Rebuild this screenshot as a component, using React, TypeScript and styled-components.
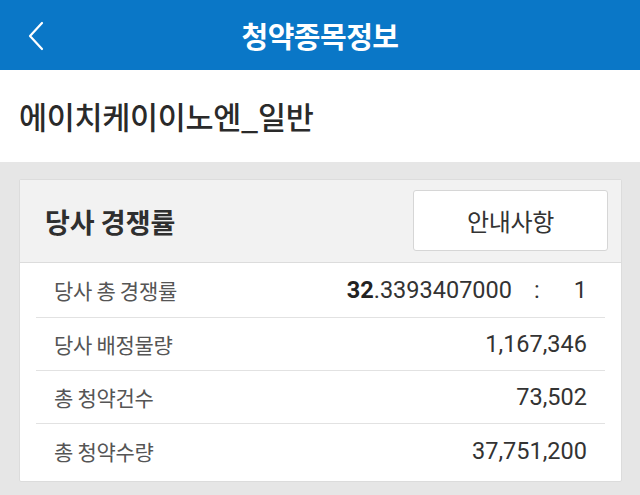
import React from "react";
import styled, { createGlobalStyle } from "styled-components";

const Global = createGlobalStyle`
  html, body { margin: 0; padding: 0; background: #e6e6e6; }
  body { font-family: Roboto, "Noto Sans CJK KR", sans-serif; }
  * { box-sizing: border-box; }
`;

const Page = styled.div`
  width: 640px;
  height: 495px;
  background: #e6e6e6;
  display: flex;
  flex-direction: column;
  overflow: hidden;
`;

const TopBar = styled.header`
  height: 70px;
  background: #0a77c7;
  display: flex;
  align-items: center;
  position: relative;
`;

const BackButton = styled.button`
  position: absolute;
  left: 22px;
  top: 18px;
  width: 28px;
  height: 36px;
  background: none;
  border: none;
  padding: 0;
  display: flex;
  align-items: center;
  justify-content: center;
`;

const TopTitle = styled.h1`
  flex: 1;
  margin: 0;
  text-align: center;
  color: #fff;
  font-family: "Noto Sans CJK KR", sans-serif;
  font-size: 29px;
  font-weight: 700;
  letter-spacing: -0.5px;
  line-height: 1;
`;

const NameSection = styled.section`
  height: 92px;
  background: #fff;
  display: flex;
  align-items: center;
  padding-left: 19px;
`;

const StockName = styled.h2`
  margin: 0;
  font-family: "Noto Sans CJK KR", sans-serif;
  font-size: 30.5px;
  font-weight: 500;
  color: #2a2a2a;
  letter-spacing: -0.3px;
`;

const Content = styled.main`
  flex: 1;
  padding: 17px 18px 0 19px;
`;

const Card = styled.div`
  border: 1px solid #dcdcdc;
  border-radius: 2px;
  background: #fff;
`;

const CardHeader = styled.div`
  height: 83px;
  background: #f2f2f2;
  border-bottom: 1px solid #dcdcdc;
  display: flex;
  align-items: center;
  justify-content: space-between;
  padding: 0 13px 0 25px;
`;

const CardTitle = styled.h3`
  margin: 0;
  font-family: "Noto Sans CJK KR", sans-serif;
  font-size: 27px;
  font-weight: 700;
  color: #2f2f2f;
  letter-spacing: 0;
`;

const InfoButton = styled.button`
  width: 195px;
  height: 61px;
  margin-top: -2px;
  background: #fff;
  border: 1px solid #d6d6d6;
  border-radius: 3px;
  font-family: "Noto Sans CJK KR", sans-serif;
  font-size: 24px;
  color: #333;
  letter-spacing: -0.3px;
`;

const CardBody = styled.div`
  padding: 0 16px 4px 16px;
`;

const Row = styled.div<{ $first?: boolean }>`
  height: ${(p) => (p.$first ? "55px" : "53px")};
  display: flex;
  align-items: center;
  justify-content: space-between;
  padding: 0 18px 0 18px;
  border-bottom: 1px solid #e2e2e2;
  &:last-child { border-bottom: none; }
`;

const Label = styled.span`
  font-family: "Noto Sans CJK KR", sans-serif;
  font-size: 21px;
  color: #555;
  letter-spacing: -0.3px;
`;

const Value = styled.span`
  font-family: Roboto, sans-serif;
  font-size: 23.5px;
  color: #333;
  display: flex;
  align-items: baseline;
`;

const Strong = styled.b`
  font-weight: 700;
  color: #222;
`;

const Colon = styled.span`
  margin: 0 0 0 22px;
  width: 8px;
`;

const One = styled.span`
  width: 45px;
  text-align: right;
`;

const rows = [
  { label: "당사 배정물량", value: "1,167,346" },
  { label: "총 청약건수", value: "73,502" },
  { label: "총 청약수량", value: "37,751,200" },
];

export default function App() {
  return (
    <Page>
      <Global />
      <TopBar>
        <BackButton aria-label="back">
          <svg width="18" height="30" viewBox="0 0 18 30">
            <path d="M15 2 L3 15 L15 28" fill="none" stroke="#fff" strokeWidth="2.2" strokeLinecap="round" strokeLinejoin="round" />
          </svg>
        </BackButton>
        <TopTitle>청약종목정보</TopTitle>
      </TopBar>
      <NameSection>
        <StockName>에이치케이이노엔_일반</StockName>
      </NameSection>
      <Content>
        <Card>
          <CardHeader>
            <CardTitle>당사 경쟁률</CardTitle>
            <InfoButton>안내사항</InfoButton>
          </CardHeader>
          <CardBody>
            <Row $first>
              <Label>당사 총 경쟁률</Label>
              <Value>
                <Strong>32</Strong>.3393407000
                <Colon>:</Colon>
                <One>1</One>
              </Value>
            </Row>
            {rows.map((r) => (
              <Row key={r.label}>
                <Label>{r.label}</Label>
                <Value>{r.value}</Value>
              </Row>
            ))}
          </CardBody>
        </Card>
      </Content>
    </Page>
  );
}
